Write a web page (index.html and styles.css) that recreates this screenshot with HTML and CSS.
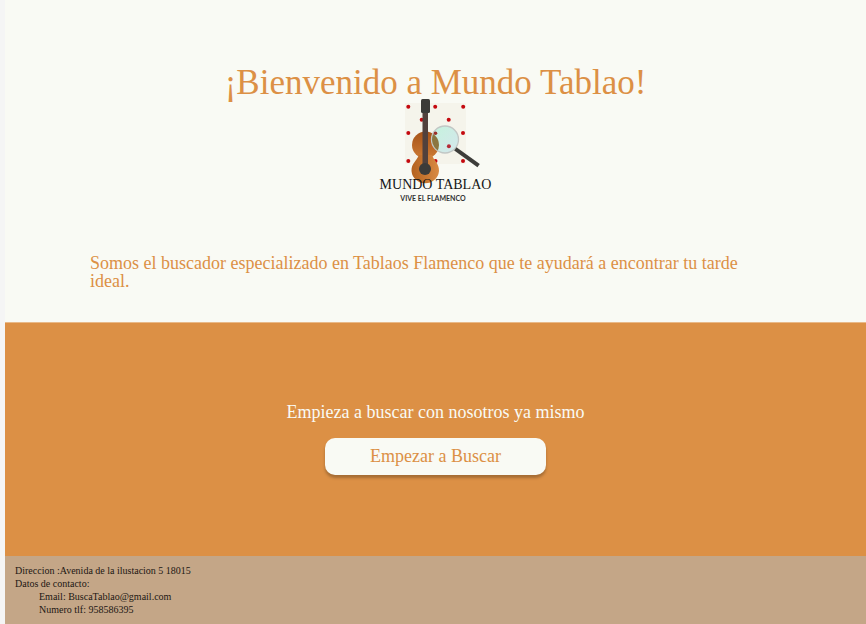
FILE: index.html
```html
<!DOCTYPE html>
<html lang="es">
<head>
<meta charset="utf-8">
<title>Mundo Tablao</title>
<link rel="stylesheet" href="styles.css">
</head>
<body>
<main class="page">
  <section class="hero">
    <h1 class="title">¡Bienvenido a Mundo Tablao!</h1>
    <svg class="logo" viewBox="375 98 121 106" role="img" aria-label="Mundo Tablao, vive el flamenco">
      <defs>
        <linearGradient id="wood" x1="0" y1="0" x2="1" y2="0">
          <stop offset="0" stop-color="#b4621f"/>
          <stop offset="1" stop-color="#d98b43"/>
        </linearGradient>
        <linearGradient id="upper" x1="0" y1="0" x2="0" y2="1">
          <stop offset="0" stop-color="#a65318"/>
          <stop offset="1" stop-color="#cc7a33"/>
        </linearGradient>
        <linearGradient id="glass" x1="0" y1="0" x2="1" y2="1">
          <stop offset="0" stop-color="#c5f3dd"/>
          <stop offset="1" stop-color="#d5e6ec"/>
        </linearGradient>
        <clipPath id="lens"><circle cx="445" cy="139.500" r="13"/></clipPath>
      </defs>
      <rect x="405" y="103" width="61" height="61" fill="#f5f4eb"/>
      <g fill="#c4090f">
        <circle cx="408.300" cy="106.800" r="2"/>
        <circle cx="435.200" cy="106.800" r="2"/>
        <circle cx="463.200" cy="106.800" r="2"/>
        <circle cx="421.700" cy="119.800" r="2"/>
        <circle cx="448.700" cy="119.800" r="2"/>
        <circle cx="408.300" cy="132.900" r="2"/>
        <circle cx="463" cy="132.900" r="2"/>
        <circle cx="408.300" cy="161" r="2"/>
        <circle cx="435.500" cy="161" r="2"/>
        <circle cx="463" cy="161" r="2"/>
      </g>
      <circle cx="425.500" cy="145" r="13.500" fill="url(#upper)"/>
      <path d="M419 155 C416 162 411.500 163 411.500 171 A13.800 13.500 0 0 0 439 171 C439 163 434 161 432 155Z" fill="url(#wood)"/>
      <path d="M422.500 112h5.500v56h-5.500z" fill="#51413c"/>
      <rect x="421" y="99" width="9" height="14" rx="1.500" fill="#3b3b38"/>
      <circle cx="425" cy="169" r="6" fill="#3b3b39"/>
      <circle cx="445" cy="139.500" r="13.500" fill="url(#glass)" stroke="#c2c7c5" stroke-width="1.300"/>
      <circle cx="425.500" cy="145" r="13.500" fill="#8b7640" clip-path="url(#lens)"/>
      <circle cx="435.500" cy="133.200" r="1.800" fill="#9b302a"/>
      <circle cx="448.900" cy="146.200" r="2" fill="#b52b38"/>
      <path d="M457 150L477 164.500" stroke="#3d3d3a" stroke-width="4" stroke-linecap="square"/>
      <text class="logo-name" x="435.500" y="189" text-anchor="middle">MUNDO TABLAO</text>
      <text class="logo-tag" x="433" y="201" text-anchor="middle">VIVE EL FLAMENCO</text>
    </svg>
    <p class="intro">Somos el buscador especializado en Tablaos Flamenco que te ayudará a encontrar tu tarde ideal.</p>
  </section>
  <section class="search">
    <p class="prompt">Empieza a buscar con nosotros ya mismo</p>
    <button class="start" type="button">Empezar a Buscar</button>
  </section>
  <footer class="contact">
    <p>Direccion :Avenida de la ilustacion 5 18015</p>
    <p>Datos de contacto:</p>
    <p class="detail">Email: BuscaTablao@gmail.com</p>
    <p class="detail">Numero tlf: 958586395</p>
  </footer>
</main>
</body>
</html>
```
FILE: styles.css
```css
* { box-sizing: border-box; }
body {
  margin: 0;
  background: #f5f5f5;
  font-family: "Liberation Serif", serif;
}
h1, p { margin: 0; font-weight: 400; }
.page {
  min-height: 100vh;
  margin-left: 5px;
  display: flex;
  flex-direction: column;
}
.hero {
  display: flex;
  flex-direction: column;
  align-items: center;
  padding: 64px 96px 32px 85px;
  background: #f9faf4;
  color: #dc9045;
}
.title, .logo { margin-left: 11px; }
.title { font-size: 35px; line-height: 38px; }
.logo {
  display: block;
  width: 121px;
  height: 106px;
  margin-top: -4px;
  margin-bottom: 50px;
}
.logo-name { font-size: 14px; fill: #151515; }
.logo-tag { font: 700 7px Lato, sans-serif; fill: #333; }
.intro {
  width: 100%;
  font-size: 18px;
  line-height: 18px;
}
.search {
  flex: 1;
  display: flex;
  flex-direction: column;
  align-items: center;
  justify-content: center;
  gap: 16px;
  padding: 79px 24px 81px;
  border-top: 1px solid #e9b988;
  background: #dc9045;
}
.prompt { color: #f9faf4; font-size: 18px; line-height: 20px; }
.start {
  width: 221px;
  padding: 8px 16px;
  border: 0;
  border-radius: 10px;
  background: #f9faf4;
  box-shadow: 0 3px 3px rgba(0, 0, 0, 0.25);
  color: #dc9045;
  font: 18px/21px "Liberation Serif", serif;
}
.contact {
  padding: 8px 10px;
  background: #c4a687;
  color: #1c1713;
  font-size: 10px;
  line-height: 13px;
}
.detail { padding-left: 24px; }
```
